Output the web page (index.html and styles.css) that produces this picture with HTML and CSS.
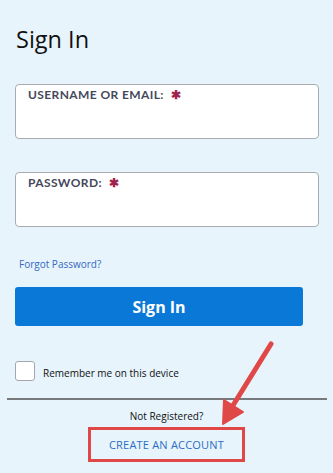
FILE: index.html
```html
<!DOCTYPE html>
<html>
<head>
<meta charset="utf-8">
<link rel="stylesheet" href="styles.css">
</head>
<body>
<div class="page">
  <div class="form">
    <h1 class="title">Sign In</h1>
    <div class="field">
      <div class="label">USERNAME OR EMAIL: <span class="req">&#x2731;</span></div>
    </div>
    <div class="field field-pw">
      <div class="label">PASSWORD: <span class="req">&#x2731;</span></div>
    </div>
    <a class="forgot">Forgot Password?</a>
    <div class="btn">Sign In</div>
    <div class="remember">
      <span class="box"></span>
      <span class="remember-text">Remember me on this device</span>
    </div>
  </div>
  <div class="divider"></div>
  <div class="register">
    <div class="not-reg">Not Registered?</div>
    <div class="create">CREATE AN ACCOUNT</div>
  </div>
  <svg class="arrow" width="333" height="473" viewBox="0 0 333 473">
    <line x1="271" y1="344" x2="232" y2="407" stroke="#e04848" stroke-width="5" stroke-linecap="round"/>
    <polygon points="223,424 224,400 243,412" fill="#e04848" stroke="#e04848" stroke-width="2" stroke-linejoin="round"/>
  </svg>
</div>
</body>
</html>
```
FILE: styles.css
```css
html, body {
  margin: 0;
  padding: 0;
  background: #e7f4fc;
}
.page {
  position: relative;
  width: 333px;
  height: 473px;
  overflow: hidden;
  font-family: "Open Sans", "Noto Sans", sans-serif;
}
.form {
  padding: 0 14px 0 15px;
}
.title {
  margin: 0 0 0 1px;
  padding-top: 24px;
  font-size: 23.5px;
  line-height: 31px;
  font-weight: 400;
  color: #111;
}
.field {
  margin-top: 29px;
  width: 304px;
  height: 55px;
  box-sizing: border-box;
  border: 1px solid #a9adb0;
  border-radius: 4px;
  background: #fff;
  padding: 3px 0 0 12px;
}
.field-pw {
  margin-top: 33px;
}
.label {
  font-family: "Lato", sans-serif;
  font-weight: 700;
  font-size: 12px;
  line-height: 14px;
  letter-spacing: 0.4px;
  color: #45485a;
}
.req {
  color: #a0234e;
  font-size: 12px;
  margin-left: 4px;
}
.forgot {
  display: block;
  margin-top: 30px;
  margin-left: 4px;
  font-size: 10px;
  line-height: 14px;
  color: #3569c2;
}
.btn {
  margin-top: 16px;
  width: 288px;
  height: 39px;
  border-radius: 3px;
  background: #0a78d6;
  color: #fff;
  font-weight: 700;
  font-size: 16px;
  display: flex;
  align-items: center;
  justify-content: center;
}
.remember {
  margin-top: 35px;
  display: flex;
  align-items: center;
  gap: 8px;
}
.box {
  width: 20px;
  height: 20px;
  box-sizing: border-box;
  border: 1px solid #a4a8ac;
  border-radius: 3px;
  background: #fff;
}
.remember-text {
  font-size: 10px;
  color: #111;
  margin-top: 4px;
}
.divider {
  margin: 17px 6px 0 7px;
  height: 2px;
  background: #777a7c;
}
.register {
  display: flex;
  flex-direction: column;
  align-items: center;
}
.not-reg {
  margin-top: 9px;
  font-size: 10px;
  line-height: 14px;
  color: #111;
}
.create {
  margin-top: 4px;
  width: 157px;
  height: 35px;
  box-sizing: border-box;
  border: 3px solid #e04848;
  display: flex;
  align-items: center;
  justify-content: center;
  font-size: 11px;
  color: #2d6cc6;
  letter-spacing: 0.2px;
}
.arrow {
  position: absolute;
  left: 0;
  top: 0;
  pointer-events: none;
}
```
